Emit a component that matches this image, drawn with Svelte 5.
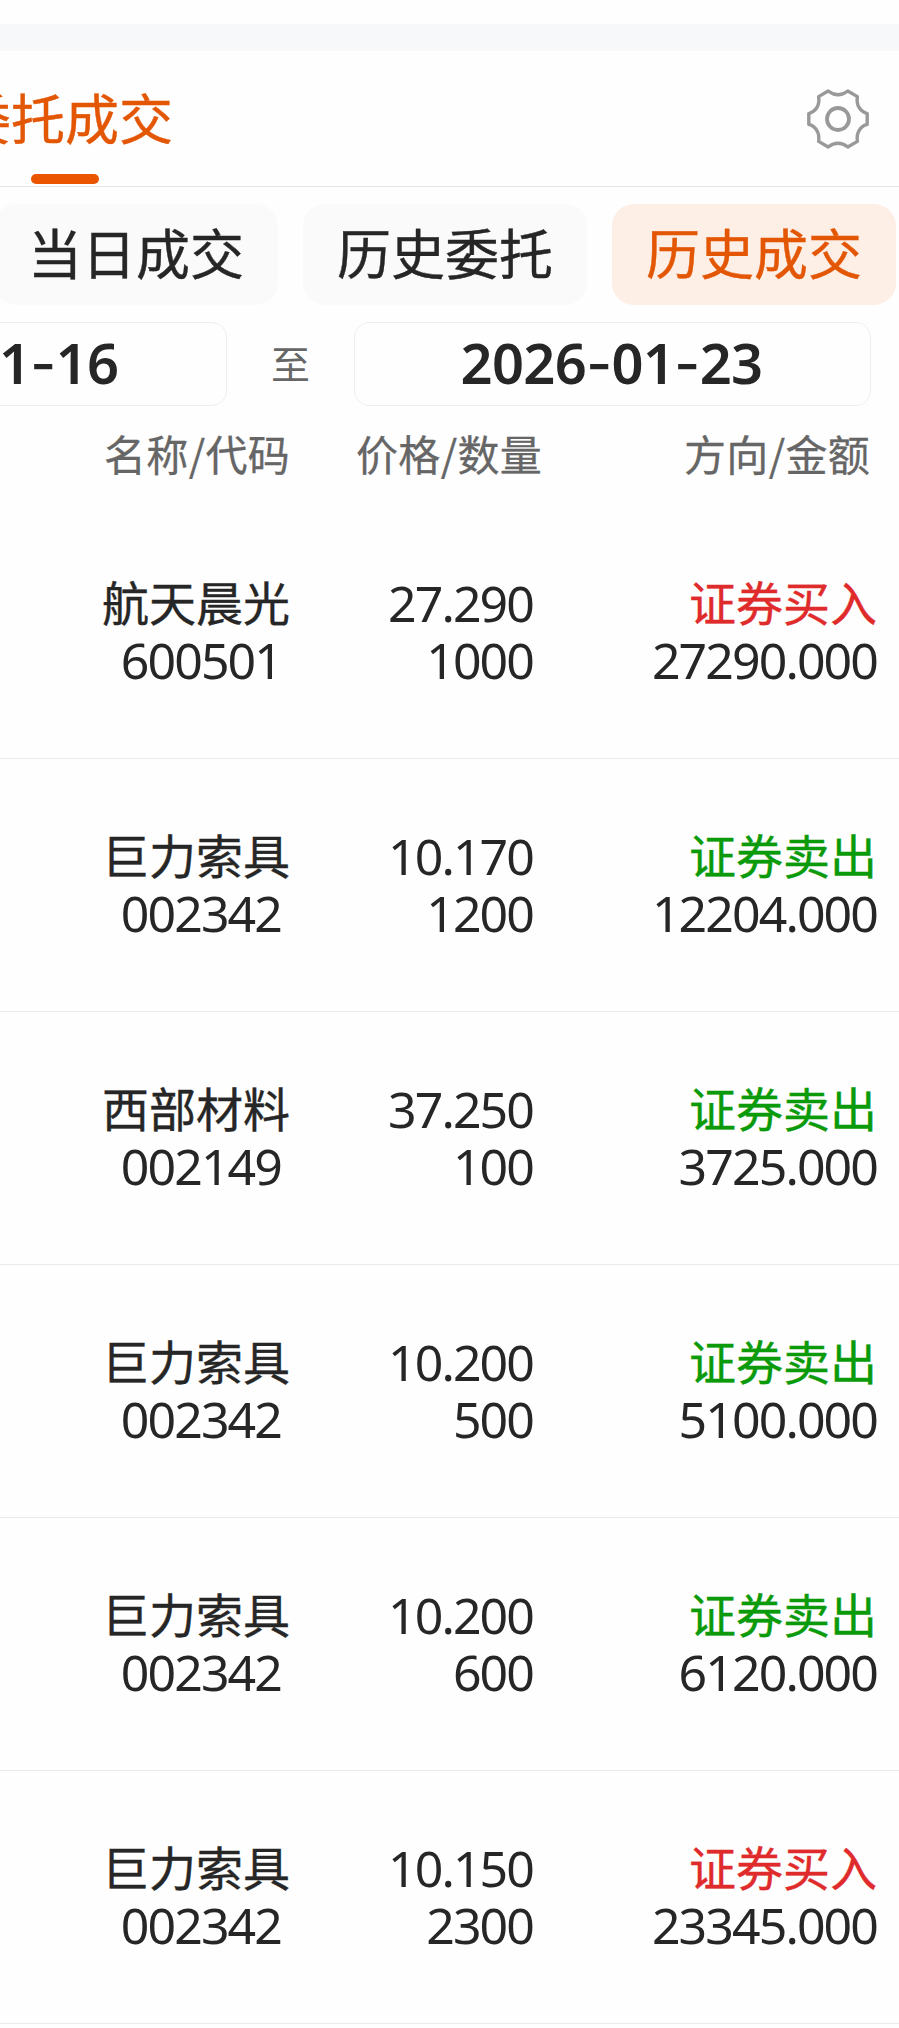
<script lang="ts">
  type Trade = {
    name: string;
    code: string;
    price: string;
    quantity: string;
    side: 'buy' | 'sell';
    amount: string;
  };

  const tabs = ['当日成交', '历史委托', '历史成交'];
  let activeTab = $state('历史成交');

  const startDate = '2026-01-16';
  const endDate = '2026-01-23';

  const sideLabel = { buy: '证券买入', sell: '证券卖出' };

  const trades: Trade[] = [
    { name: '航天晨光', code: '600501', price: '27.290', quantity: '1000', side: 'buy', amount: '27290.000' },
    { name: '巨力索具', code: '002342', price: '10.170', quantity: '1200', side: 'sell', amount: '12204.000' },
    { name: '西部材料', code: '002149', price: '37.250', quantity: '100', side: 'sell', amount: '3725.000' },
    { name: '巨力索具', code: '002342', price: '10.200', quantity: '500', side: 'sell', amount: '5100.000' },
    { name: '巨力索具', code: '002342', price: '10.200', quantity: '600', side: 'sell', amount: '6120.000' },
    { name: '巨力索具', code: '002342', price: '10.150', quantity: '2300', side: 'buy', amount: '23345.000' }
  ];
</script>

{#snippet dateText(value: string)}
  {#each value.split('-') as part, i}{#if i > 0}<span class="dash">-</span>{/if}{part}{/each}
{/snippet}

<div class="page">
  <div class="band"></div>

  <header class="header">
    <div class="title">委托成交</div>
    <button class="settings" aria-label="设置">
      <svg viewBox="-32 -32 64 64" fill="none" stroke="#999" stroke-linejoin="round">
        <path
          stroke-width="3.4"
          d="M-9.8 -28 Q0 -20.4 9.8 -28 L19.4 -22.4 C18 -14 22 -7.5 29.2 -5.4 V5.4 C22 7.5 18 14 19.4 22.4 L9.8 28 Q0 20.4 -9.8 28 L-19.4 22.4 C-18 14 -22 7.5 -29.2 5.4 V-5.4 C-22 -7.5 -18 -14 -19.4 -22.4 Z"
        />
        <circle r="11" stroke-width="3.8" />
      </svg>
    </button>
  </header>

  <nav class="tabs">
    {#each tabs as tab}
      <button class="tab" class:active={tab === activeTab} onclick={() => (activeTab = tab)}>
        {tab}
      </button>
    {/each}
  </nav>

  <div class="dates">
    <div class="date">{@render dateText(startDate)}</div>
    <span class="to">至</span>
    <div class="date">{@render dateText(endDate)}</div>
  </div>

  <div class="columns">
    <span>名称/代码</span>
    <span>价格/数量</span>
    <span>方向/金额</span>
  </div>

  <div class="list">
    {#each trades as trade}
      <div class="row">
        <div class="cell">
          <div class="name">{trade.name}</div>
          <div class="num code">{trade.code}</div>
        </div>
        <div class="cell">
          <div class="num">{trade.price}</div>
          <div class="num">{trade.quantity}</div>
        </div>
        <div class="cell">
          <div class="name side {trade.side}">{sideLabel[trade.side]}</div>
          <div class="num">{trade.amount}</div>
        </div>
      </div>
    {/each}
  </div>
</div>

<style>
  :global(body) {
    background: #fefefe;
  }

  .page {
    width: 899px;
    height: 2028px;
    box-sizing: border-box;
    padding-top: 24px;
    overflow: hidden;
    background: #fefefe;
    color: #262626;
    font-family: 'Noto Sans CJK SC', sans-serif;
  }

  button {
    border: none;
    padding: 0;
    font-family: inherit;
    color: inherit;
    cursor: pointer;
  }

  .band {
    height: 27px;
    background: #f7f8fa;
  }

  .header {
    display: flex;
    justify-content: space-between;
    height: 135px;
    border-bottom: 1px solid #e6e6e6;
  }

  .title {
    display: flex;
    flex-direction: column;
    align-items: center;
    margin-left: -43px;
    font-size: 54px;
    line-height: 80px;
    padding-top: 26px;
    color: #e35604;
    white-space: nowrap;
    -webkit-text-stroke: 0.4px;
  }

  .title::after {
    content: '';
    width: 68px;
    height: 10px;
    margin-top: 17px;
    border-radius: 5px;
    background: #ec5500;
  }

  .settings {
    width: 64px;
    height: 64px;
    margin: 36px 29px 0 0;
    background: none;
  }

  .settings svg {
    display: block;
    width: 64px;
    height: 64px;
  }

  .tabs {
    display: flex;
    justify-content: flex-end;
    gap: 25px;
    padding: 17px 3px 0 0;
  }

  .tab {
    flex: none;
    width: 284px;
    height: 101px;
    padding-bottom: 6px;
    border-radius: 22px;
    background: #fafafa;
    font-size: 54px;
    line-height: 95px;
    -webkit-text-stroke: 0.4px;
  }

  .tab.active {
    background: #fdeee6;
    color: #e35604;
  }

  .dates {
    display: flex;
    justify-content: flex-end;
    align-items: center;
    margin-top: 17px;
    padding-right: 28px;
  }

  .date {
    flex: none;
    width: 517px;
    height: 84px;
    box-sizing: border-box;
    padding-right: 2px;
    border: 1px solid #eee;
    border-radius: 15px;
    text-align: center;
    font-family: 'Noto Sans', sans-serif;
    font-size: 56px;
    font-weight: 600;
    line-height: 79px;
    letter-spacing: -0.6px;
  }

  .dash {
    font-family: Inter, sans-serif;
    font-weight: 500;
  }

  .to {
    flex: none;
    width: 127px;
    padding-bottom: 4px;
    text-align: center;
    font-size: 39px;
    line-height: 56px;
    color: #666;
  }

  .columns {
    display: grid;
    grid-template-columns: 290px 252px 328px;
    justify-items: end;
    margin-top: 17px;
    height: 83px;
    font-size: 42px;
    line-height: 60px;
    letter-spacing: 0.3px;
    color: #666;
    -webkit-text-stroke: 0.3px;
  }

  .row {
    display: grid;
    grid-template-columns: 290px 245px 344px;
    box-sizing: border-box;
    height: 253px;
    padding-top: 69px;
    border-bottom: 1px solid #e8ebed;
  }

  .cell {
    text-align: right;
    line-height: 57px;
  }

  .name {
    height: 57px;
    font-size: 47px;
    line-height: 52px;
    -webkit-text-stroke: 0.4px;
  }

  .num {
    height: 57px;
    padding-right: 2px;
    font-family: 'Noto Sans', sans-serif;
    font-size: 50px;
    letter-spacing: -1.9px;
  }

  .code {
    margin-right: 7px;
  }

  .side {
    padding-right: 2px;
  }

  .buy {
    color: #df2b2b;
  }

  .sell {
    color: #0a9a0a;
  }
</style>
